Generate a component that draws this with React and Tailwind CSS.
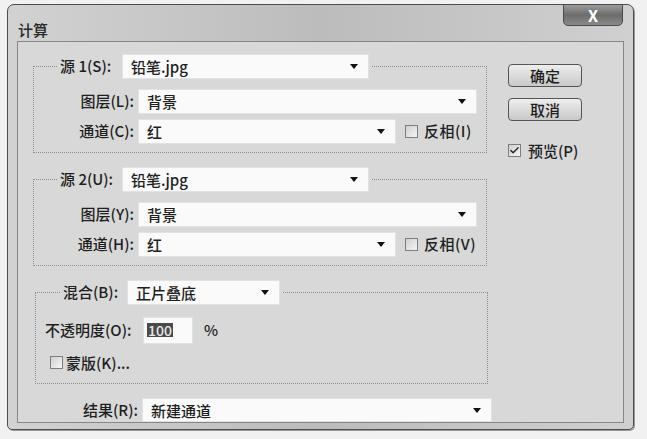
import { Check } from "lucide-react";

function Select({ value, className = "" }) {
  return (
    <div
      className={`flex items-center justify-between bg-[#fafafa] border border-[#e2e2e2] pl-[8px] pr-[10px] text-[15px] leading-none ${className}`}
    >
      <span>{value}</span>
      <span className="w-0 h-0 border-l-[4px] border-r-[4px] border-t-[5px] border-l-transparent border-r-transparent border-t-[#111]" />
    </div>
  );
}

function Box({ checked = false }) {
  return (
    <span className="w-[13px] h-[13px] shrink-0 border border-[#7d7d7d] bg-gradient-to-br from-[#cfcfcf] to-[#f6f6f6] flex items-center justify-center">
      {checked && <Check size={11} strokeWidth={3} className="text-[#222]" />}
    </span>
  );
}

function Row({ label, width, value, invert, className = "" }) {
  return (
    <div className={`flex items-center ${className}`}>
      <span className="w-[100px] text-right">{label}</span>
      <Select value={value} className={`ml-[4px] h-[25px] ${width}`} />
      {invert && (
        <div className="flex items-center ml-[9px] gap-[6px]">
          <Box />
          <span className="tracking-[0.5px]">{invert}</span>
        </div>
      )}
    </div>
  );
}

function Source({ label, layer, channel, invert, className = "" }) {
  return (
    <fieldset
      className={`w-[454px] border border-dotted border-[#8e8e8e] pb-[8px] ${className}`}
    >
      <legend className="ml-[24px] px-[2px] flex items-center">
        <span className="w-[62px]">{label}</span>
        <Select value="铅笔.jpg" className="w-[247px] h-[25px]" />
      </legend>
      <Row label={layer} value="背景" width="w-[339px]" className="mt-[10px]" />
      <Row
        label={channel}
        value="红"
        width="w-[258px]"
        invert={invert}
        className="mt-[5px]"
      />
    </fieldset>
  );
}

export default function App() {
  return (
    <div className="w-[647px] h-[439px] bg-[#f1f1f1] pt-[4px] pl-[7px] text-[15px] font-medium text-[#1e1e1e] font-['Noto_Sans_CJK_SC','Liberation_Sans',sans-serif]">
      <div className="w-[627px] h-[426px] rounded-t-[7px] rounded-b-[5px] border border-[#4d4d4d] bg-gradient-to-r from-[#d2d2d2] via-[#bcbcbc] to-[#d0d0d0] flex flex-col px-[9px] pb-[6px] shadow-[1px_1px_0_#9a9a9a]">
        <div className="h-[37px] flex items-start justify-between">
          <span className="mt-[17px] ml-[1px] leading-none text-[#2a2a2a]">计算</span>
          <button className="w-[60px] h-[22px] -mt-px mr-[1px] rounded-b-[5px] border border-[#4a4a4a] bg-gradient-to-b from-[#9c9c9c] via-[#6c6c6c] to-[#8a8a8a] text-white font-bold text-[16px] leading-none flex items-center justify-center">
            X
          </button>
        </div>
        <div className="flex-1 border border-[#868686] bg-[#d8d8d8] flex pl-[15px] pt-[12px]">
          <div className="w-[460px]">
            <Source
              label="源 1(S):"
              layer="图层(L):"
              channel="通道(C):"
              invert="反相(I)"
            />
            <Source
              label="源 2(U):"
              layer="图层(Y):"
              channel="通道(H):"
              invert="反相(V)"
              className="mt-[14px]"
            />
            <fieldset className="w-[453px] ml-[2px] mt-[14px] border border-dotted border-[#8e8e8e] pb-[9px]">
              <legend className="ml-[25px] px-[2px] flex items-center">
                <span className="w-[64px]">混合(B):</span>
                <Select value="正片叠底" className="w-[153px] h-[25px]" />
              </legend>
              <div className="flex items-center mt-[12px] pl-[9px]">
                <span className="w-[97px]">不透明度(O):</span>
                <div className="ml-[1px] w-[50px] h-[27px] bg-[#fafafa] border border-[#e2e2e2] flex items-center pl-[3px]">
                  <span className="bg-[#4a4a4a] text-[#e8e8e8] px-px leading-[14px] text-[14px]">100</span>
                </div>
                <span className="ml-[11px]">%</span>
              </div>
              <div className="flex items-center mt-[8px] pl-[14px] gap-[3px]">
                <Box />
                <span>蒙版(K)...</span>
              </div>
            </fieldset>
            <div className="flex items-center mt-[14px]">
              <span className="w-[105px] text-right">结果(R):</span>
              <Select value="新建通道" className="ml-[4px] w-[350px] h-[24px]" />
            </div>
          </div>
          <div className="ml-[15px] mt-[10px] flex flex-col">
            <button className="w-[74px] h-[23px] rounded-[4px] border border-[#555] bg-gradient-to-b from-[#eeeeee] to-[#c9c9c9] leading-none">
              确定
            </button>
            <button className="w-[74px] h-[23px] mt-[11px] rounded-[4px] border border-[#555] bg-gradient-to-b from-[#eeeeee] to-[#c9c9c9] leading-none">
              取消
            </button>
            <div className="flex items-center mt-[19px] gap-[7px]">
              <Box checked />
              <span>预览(P)</span>
            </div>
          </div>
        </div>
      </div>
    </div>
  );
}
